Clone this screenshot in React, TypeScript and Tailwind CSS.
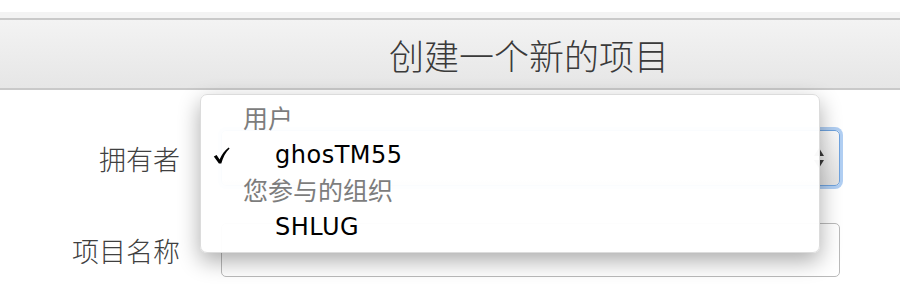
// New project form with the owner select opened (macOS-style popup menu).
const MENU = [
  { kind: 'group', label: '用户' },
  { kind: 'item', label: 'ghosTM55', checked: true },
  { kind: 'group', label: '您参与的组织' },
  { kind: 'item', label: 'SHLUG' },
] as const

function SelectArrows() {
  return (
    <svg width="12" height="22" viewBox="0 0 12 22" className="text-[#3a3a3a]">
      <path d="M6 1 L11 9 H1 Z" fill="currentColor" />
      <path d="M6 21 L11 13 H1 Z" fill="currentColor" />
    </svg>
  )
}

// calligraphic check mark, like the system menu one
function CheckMark() {
  return (
    <svg width="17" height="17" viewBox="0 0 17 17" className="absolute left-[12px] text-black">
      <path
        d="M0.8 9.6 L3.6 7.9 L6.6 12.4 C8.6 7.6 11.6 3.4 15.6 0.4 L16.6 1.4 C12.8 5 9.9 10.4 8.3 16.4 L5.9 16.4 Z"
        fill="currentColor"
      />
    </svg>
  )
}

function OwnerMenu() {
  return (
    <div className="absolute left-[200px] top-[94px] h-[159px] w-[620px] rounded-[7px] border border-[#dcdcdc] bg-white/[0.97] pt-[6px] shadow-[0_8px_22px_rgba(0,0,0,0.33)]">
      {MENU.map((m) => (
        <div key={m.label} className="relative flex h-[36px] items-center">
          {m.kind === 'group' ? (
            <span className="pl-[42px] text-[25px] leading-none text-[#7d7d7d]">{m.label}</span>
          ) : (
            <>
              {'checked' in m && m.checked && <CheckMark />}
              <span className="pl-[74px] text-[24px] leading-none tracking-[0.5px] text-black">{m.label}</span>
            </>
          )}
        </div>
      ))}
    </div>
  )
}

export default function App() {
  return (
    <div className="relative h-[300px] w-[900px] overflow-hidden bg-white font-['DejaVu_Sans','Noto_Sans_CJK_SC',sans-serif]">
      <div className="h-[12px] bg-white" />
      <div className="h-[6px] bg-[#f3f3f3]" />
      <header className="flex h-[72px] items-center justify-center border-y-2 border-[#c9c9c9] bg-gradient-to-b from-[#f3f3f3] to-[#e6e6e6] pl-[158px]">
        <h1 className="font-['Noto_Sans_CJK_SC',sans-serif] text-[35px] font-light leading-none text-[#3a3a3a]">
          创建一个新的项目
        </h1>
      </header>

      <div className="grid grid-cols-[180px_619px] items-center gap-x-[41px] gap-y-[37px] pt-[40px]">
        <label className="text-right font-['Noto_Sans_CJK_SC',sans-serif] text-[27px] font-light leading-none text-[#404040]">
          拥有者
        </label>
        <div className="flex h-[56px] items-center justify-end rounded-[5px] border border-[#6fa3de] bg-gradient-to-b from-[#fafafa] to-[#e2e2e2] pr-[14px] shadow-[0_0_0_3px_rgba(125,175,235,0.6)]">
          <SelectArrows />
        </div>

        <label className="text-right font-['Noto_Sans_CJK_SC',sans-serif] text-[27px] font-light leading-none text-[#404040]">
          项目名称
        </label>
        <div className="h-[54px] rounded-[5px] border-[1.5px] border-[#bababa] bg-white" />
      </div>

      <OwnerMenu />
    </div>
  )
}
